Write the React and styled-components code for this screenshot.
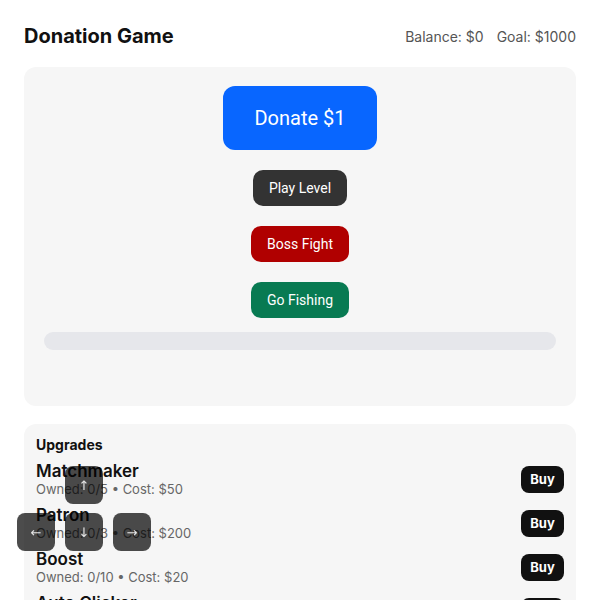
import React from 'react'
import styled, { createGlobalStyle } from 'styled-components'

const GlobalStyle = createGlobalStyle`
  body {
    margin: 0;
    background: #ffffff;
    font-family: Inter, "Liberation Sans", sans-serif;
    color: #111;
  }
`

const Page = styled.div`
  padding: 24px;
`

const Header = styled.header`
  display: flex;
  align-items: center;
  justify-content: space-between;
  height: 24px;
  margin-bottom: 19px;
`

const Title = styled.h1`
  margin: 0;
  font-size: 20px;
  font-weight: 700;
  line-height: 24px;
  color: #111;
`

const Stats = styled.div`
  display: flex;
  gap: 13px;
  font-size: 14px;
  color: #555;
`

const Card = styled.section`
  background: #f6f6f6;
  border-radius: 12px;
  padding: ${p => p.$padding || '20px'};
  margin-bottom: 18px;
`

const Actions = styled.div`
  display: flex;
  flex-direction: column;
  align-items: center;
  gap: 20px;
`

const Button = styled.button`
  border: none;
  color: #fff;
  font-family: Roboto, "Liberation Sans", sans-serif;
  font-size: ${p => (p.$big ? '20px' : '14px')};
  height: ${p => (p.$big ? '64px' : '36px')};
  padding: ${p => (p.$big ? '0 31px' : '0 16px')};
  border-radius: ${p => (p.$big ? '12px' : '10px')};
  background: ${p => p.$bg};
  cursor: pointer;
`

const Progress = styled.div`
  height: 18px;
  border-radius: 9px;
  background: #e6e7eb;
  margin-top: 14px;
`

const SectionTitle = styled.h2`
  margin: 0 0 8px;
  font-size: 14px;
  line-height: 17px;
  font-weight: 700;
`

const List = styled.div`
  display: flex;
  flex-direction: column;
  gap: 8px;
`

const Row = styled.div`
  display: flex;
  align-items: center;
  justify-content: space-between;
`

const Name = styled.div`
  font-size: 17px;
  line-height: 20px;
  font-weight: 600;
`

const Meta = styled.div`
  font-size: 13px;
  line-height: 16px;
  color: #666;
`

const BuyButton = styled.button`
  border: none;
  background: #111;
  color: #fff;
  font-family: Inter, "Liberation Sans", sans-serif;
  font-weight: 700;
  font-size: 13px;
  width: 43px;
  height: 27px;
  border-radius: 8px;
  padding: 0;
`

const Pad = styled.div`
  position: fixed;
  left: 17px;
  top: 466px;
  display: grid;
  grid-template-columns: repeat(3, 38px);
  grid-template-rows: repeat(2, 38px);
  column-gap: 10px;
  row-gap: 9px;
`

const PadKey = styled.button`
  grid-column: ${p => p.$col};
  grid-row: ${p => p.$row};
  border: none;
  border-radius: 8px;
  background: rgba(0, 0, 0, 0.7);
  color: rgba(255, 255, 255, 0.85);
  font-family: "DejaVu Sans", sans-serif;
  font-size: 13px;
  padding: 0;
`

const upgrades = [
  { name: 'Matchmaker', owned: 0, max: 5, cost: 50 },
  { name: 'Patron', owned: 0, max: 3, cost: 200 },
  { name: 'Boost', owned: 0, max: 10, cost: 20 },
  { name: 'Auto Clicker', owned: 0, max: 5, cost: 100 },
]

export default function App() {
  return (
    <>
      <GlobalStyle />
      <Page>
        <Header>
          <Title>Donation Game</Title>
          <Stats>
            <span>Balance: $0</span>
            <span>Goal: $1000</span>
          </Stats>
        </Header>

        <Card $padding="19px 20px 56px">
          <Actions>
            <Button $big $bg="#0866ff">Donate $1</Button>
            <Button $bg="#333333">Play Level</Button>
            <Button $bg="#b00000">Boss Fight</Button>
            <Button $bg="#087a52">Go Fishing</Button>
          </Actions>
          <Progress />
        </Card>

        <Card $padding="12px">
          <SectionTitle>Upgrades</SectionTitle>
          <List>
            {upgrades.map(u => (
              <Row key={u.name}>
                <div>
                  <Name>{u.name}</Name>
                  <Meta>Owned: {u.owned}/{u.max} • Cost: ${u.cost}</Meta>
                </div>
                <BuyButton>Buy</BuyButton>
              </Row>
            ))}
          </List>
        </Card>
      </Page>

      <Pad>
        <PadKey $col={2} $row={1}>↑</PadKey>
        <PadKey $col={1} $row={2}>←</PadKey>
        <PadKey $col={2} $row={2}>↓</PadKey>
        <PadKey $col={3} $row={2}>→</PadKey>
      </Pad>
    </>
  )
}
